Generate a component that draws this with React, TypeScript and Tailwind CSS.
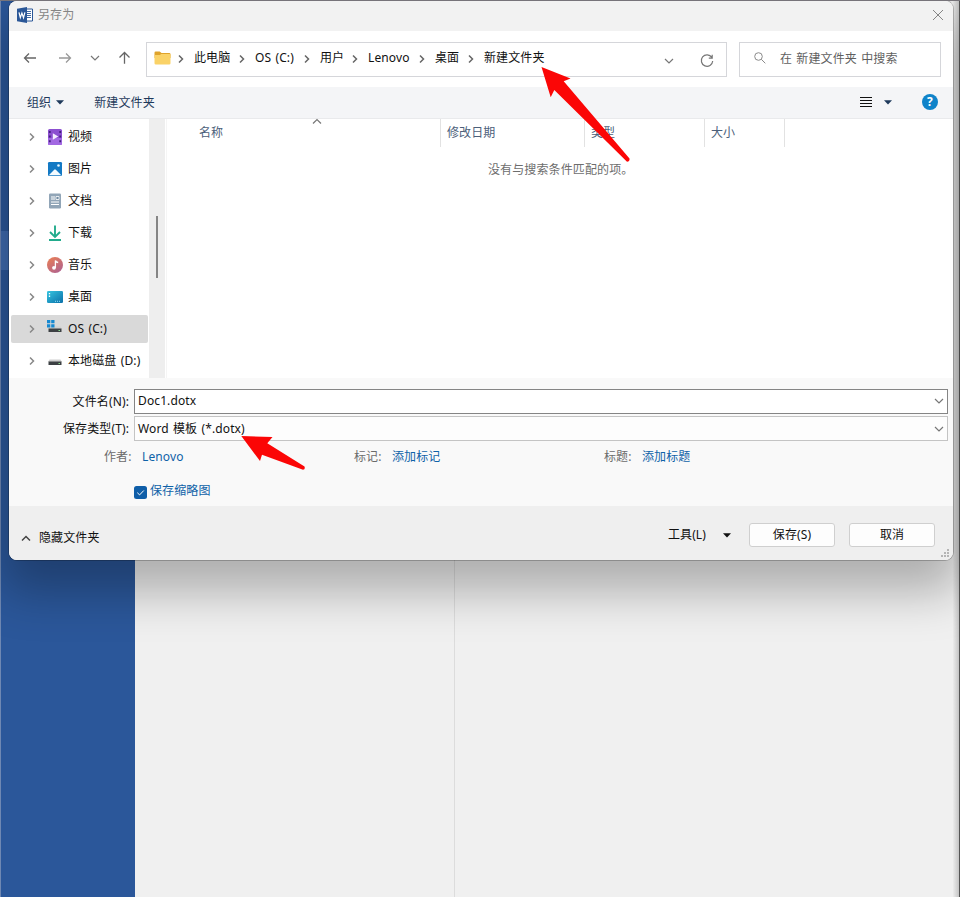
import type { ReactNode } from "react";

const crumbs = [
  { label: "此电脑", width: "w-[61px]" },
  { label: "OS (C:)", width: "w-[65px]" },
  { label: "用户", width: "w-[48px]" },
  { label: "Lenovo", width: "w-[67px]" },
  { label: "桌面", width: "w-[49px]" },
  { label: "新建文件夹", width: "w-[90px]" },
];

const columns = [
  { label: "名称", className: "w-[242px]", sorted: true },
  { label: "修改日期", className: "w-[144px] pl-1.5" },
  { label: "类型", className: "w-[120px] pl-1.5" },
  { label: "大小", className: "w-[80px] pl-1.5" },
];

function Chevron({ dir, className = "" }: { dir: "up" | "down" | "right"; className?: string }) {
  const d = { up: "M1 6.5 5 2.5 9 6.5", down: "M1 3 5 7 9 3", right: "M3 1.5 6.500 5 3 8.500" }[dir];
  return (
    <svg viewBox="0 0 10 10" className={`size-[10px] shrink-0 stroke-[1.2] ${className}`} fill="none" stroke="currentColor">
      <path d={d} />
    </svg>
  );
}

function Caret({ className = "" }: { className?: string }) {
  return (
    <svg viewBox="0 0 8 5" className={`h-[5px] w-2 shrink-0 ${className}`} fill="currentColor">
      <path d="M0 .3h8L4 4.5z" />
    </svg>
  );
}

function WordIcon() {
  return (
    <svg viewBox="0 0 16 16" className="mb-0.5 size-4">
      <path d="M9 2h6.5v12H9z" fill="#fff" stroke="#2b5797" />
      <path d="M10 4.5h4M10 6.5h4M10 8.5h4M10 10.5h4" stroke="#2b5797" strokeWidth=".9" />
      <path d="M0 1.8 10 0v16L0 14.2z" fill="#2b5797" />
      <path d="m2 5.3 1.3 5.4L4.9 6l1.6 4.7L7.9 5.3" fill="none" stroke="#fff" strokeWidth="1.2" />
    </svg>
  );
}

function FolderIcon() {
  return (
    <svg viewBox="0 0 17 14" className="mb-0.5 h-[14px] w-[17px]">
      <path d="M.5 1.7Q.5.5 1.7.5h4L7.5 2h7.8q1.2 0 1.2 1.2V7H.5z" fill="#dfa32b" />
      <path d="M.5 4.8q0-.8.8-.8h4.5l1.5-1h8.2q1 0 1 1v8.2q0 1.3-1.3 1.3H1.8Q.5 13.5.5 12.2z" fill="#fad267" />
    </svg>
  );
}

function DriveShape() {
  return (
    <>
      <path d="M2.5 6.5h11L15 9H1z" fill="#d0d0d0" />
      <path d="M1.5 8.500h13V12h-13z" fill="#3c4043" />
      <path d="M11.500 10.500H13" stroke="#8bdc8b" />
    </>
  );
}

const places: { label: string; selected?: boolean; icon: ReactNode }[] = [
  {
    label: "视频",
    icon: (
      <>
        <rect x="1" width="14" height="16" rx="1.5" fill="#8c4fd0" />
        <path d="M1 9h14v5.500q0 1.500-1.500 1.500h-11Q1 16 1 14.500z" fill="#a268e2" />
        <path d="M2.8 2v12M13.2 2v12" stroke="#43217c" strokeWidth="1.8" strokeDasharray="2 2.6" />
        <path d="m5.8 4.200 5.500 3.300-5.500 3.300z" fill="#f5edff" />
      </>
    ),
  },
  {
    label: "图片",
    icon: (
      <>
        <rect x="1" y="1" width="14" height="14" rx="1.2" fill="#1379c4" />
        <path d="m1.8 14.300 5.400-5.600q.8-.8 1.600 0l5.500 5.600z" fill="#f4fbff" />
        <circle cx="11.5" cy="4.500" r="1.3" fill="#e8f7ff" />
      </>
    ),
  },
  {
    label: "文档",
    icon: (
      <>
        <rect x="2" y=".5" width="12" height="15" rx="1.2" fill="#91a5b7" />
        <path d="M4 4h4M4 6h4M4 9h8M4 11.5h8" stroke="#fff" />
        <path d="M9 3.5h3v3H9z" fill="#6f8aa2" stroke="#fff" strokeWidth=".8" />
      </>
    ),
  },
  {
    label: "下载",
    icon: <path d="M8 .5v11M3 7l5 5 5-5M2 15h12" fill="none" stroke="#22ab8c" strokeWidth="1.9" />,
  },
  {
    label: "音乐",
    icon: (
      <>
        <defs>
          <linearGradient id="music" x1="0" y1="0" x2=".7" y2="1">
            <stop stopColor="#ec8052" />
            <stop offset="1" stopColor="#b2638d" />
          </linearGradient>
        </defs>
        <circle cx="8" cy="8" r="8" fill="url(#music)" />
        <circle cx="7" cy="10.8" r="1.9" fill="#fff" />
        <path d="M8.4 10.8V3.5q.5 1.7 2.8 2" fill="none" stroke="#fff" strokeWidth="1.3" />
      </>
    ),
  },
  {
    label: "桌面",
    icon: (
      <>
        <defs>
          <linearGradient id="desk" x1="0" y1="0" x2="1" y2="1">
            <stop stopColor="#36c5e0" />
            <stop offset="1" stopColor="#0b70a9" />
          </linearGradient>
        </defs>
        <rect y="2" width="16" height="12" rx="1.3" fill="url(#desk)" />
        <path d="M2.5 4v4" stroke="#fff" strokeWidth="1.3" strokeDasharray="1.3 1.3" />
        <path d="M8 12.3h6" stroke="#8edcf5" strokeDasharray="1 1" />
      </>
    ),
  },
  {
    label: "OS (C:)",
    selected: true,
    icon: (
      <>
        <DriveShape />
        <path d="M0 0h3.3v3.3H0zM4.200 0h3.300v3.300H4.200zM0 4.200h3.300v3.300H0zM4.200 4.200h3.300v3.300H4.200z" fill="#1689d1" />
      </>
    ),
  },
  { label: "本地磁盘 (D:)", icon: <DriveShape /> },
];

function TitleBar() {
  return (
    <header className="flex h-[30px] shrink-0 items-center bg-[#f2f2f2] pr-[9px] pl-2">
      <WordIcon />
      <span className="mb-0.5 ml-[5px] text-[#858585]">另存为</span>
      <svg viewBox="0 0 12 12" className="mb-0.5 ml-auto size-3" stroke="#858585" fill="none">
        <path d="m1 1 10 10M11 1 1 11" />
      </svg>
    </header>
  );
}

function NavBar() {
  return (
    <nav className="flex h-14 shrink-0 items-center bg-white">
      <div className="flex w-[137px] shrink-0 items-center pb-[3px] pl-[14px]">
        <svg viewBox="0 0 14 14" className="size-[14px]" fill="none" stroke="#666" strokeWidth="1.3">
          <path d="M13 7H1.500M6 2.500 1.500 7 6 11.500" />
        </svg>
        <svg viewBox="0 0 14 14" className="ml-[21px] size-[14px]" fill="none" stroke="#999" strokeWidth="1.3">
          <path d="M1 7h11.500M8 2.500 12.500 7 8 11.500" />
        </svg>
        <Chevron dir="down" className="ml-[18px] text-[#777]" />
        <svg viewBox="0 0 14 14" className="ml-[17px] size-[14px]" fill="none" stroke="#666" strokeWidth="1.3">
          <path d="M7.500 12.800V1.500M2.500 6.500l5-5 5 5" />
        </svg>
      </div>
      <div className="flex h-[35px] w-[581px] shrink-0 items-center border border-[#d5d6da] pr-3 pl-[7px]">
        <FolderIcon />
        <div className="ml-[5px] flex">
          {crumbs.map((crumb) => (
            <div key={crumb.label} className={`flex shrink-0 items-center gap-2 pb-0.5 whitespace-nowrap ${crumb.width}`}>
              <Chevron dir="right" className="mt-0.5 stroke-[1.5] text-[#666]" />
              <span>{crumb.label}</span>
            </div>
          ))}
        </div>
        <Chevron dir="down" className="mt-[3px] ml-auto text-[#777]" />
        <svg viewBox="0 0 14 14" className="mt-[3px] ml-[26px] size-[14px]" fill="none" stroke="#777" strokeWidth="1.2">
          <path d="M11.8 3.5A5.7 5.7 0 1 0 12.700 7M12.200.8v3.400H8.800" />
        </svg>
      </div>
      <div className="ml-3 flex h-[35px] w-[202px] items-center border border-[#d5d6da] pl-[14px] text-[#5f5f5f]">
        <svg viewBox="0 0 12 12" className="mb-0.5 size-3" fill="none" stroke="#8a8a8a">
          <circle cx="4.5" cy="4.5" r="3.8" />
          <path d="m7.3 7.3 4 4" />
        </svg>
        <span className="ml-[14px]">在 新建文件夹 中搜索</span>
      </div>
    </nav>
  );
}

function Toolbar() {
  return (
    <div className="flex h-8 shrink-0 items-center border-b border-[#e9eaec] bg-[#f4f5f7] pr-[15px] pl-[18px] text-[#1e395b]">
      <span>组织</span>
      <Caret className="ml-[5px]" />
      <span className="ml-[30px]">新建文件夹</span>
      <svg viewBox="0 0 12 11" className="ml-auto h-[11px] w-3" stroke="#111">
        <path d="M0 .5h12M0 3.5h12M0 6.5h12M0 9.5h12" />
      </svg>
      <Caret className="ml-3" />
      <span className="mb-px ml-[30px] flex size-4 items-center justify-center rounded-full bg-[#0f83c9] text-[12px] leading-none font-bold text-white">
        ?
      </span>
    </div>
  );
}

function Sidebar() {
  return (
    <aside className="flex w-[156px] shrink-0">
      <ul className="w-[140px] pt-0.5 pr-px pl-0.5">
        {places.map((place) => (
          <li key={place.label} className="flex h-8 items-center">
            <div
              className={`flex h-7 w-full items-center rounded-[2px] pl-4 whitespace-nowrap ${place.selected ? "bg-[#d9d9d9]" : ""}`}
            >
              <Chevron dir="right" className="stroke-[1.5] text-[#888]" />
              <svg viewBox="0 0 16 16" className={`ml-[10px] size-4 shrink-0 ${place.selected ? "mb-0.5" : ""}`}>
                {place.icon}
              </svg>
              <span className="ml-[5px]">{place.label}</span>
            </div>
          </li>
        ))}
      </ul>
      <div className="flex w-4 justify-center bg-[#eeeeee] pt-[97px]">
        <div className="h-[62px] w-0.5 bg-[#858585]" />
      </div>
    </aside>
  );
}

function FileList() {
  return (
    <section className="ml-px flex-1 border-l border-[#f5f5f5]">
      <div className="flex h-7 pl-8 text-[#4c607a]">
        {columns.map((column) => (
          <div key={column.label} className={`flex shrink-0 justify-between border-r border-[#e2e2e2] pt-[5px] ${column.className}`}>
            <span>{column.label}</span>
            {column.sorted && <Chevron dir="up" className="-mt-[7px] mr-[118px] text-[#777]" />}
          </div>
        ))}
      </div>
      <p className="mt-[14px] pl-[321px] text-[#6d6d6d]">没有与搜索条件匹配的项。</p>
    </section>
  );
}

function Field({ label, value, strong }: { label: string; value: string; strong?: boolean }) {
  return (
    <div className="flex items-center">
      <label className="mr-[5px] w-[120px] text-right">{label}</label>
      <div
        className={`flex h-[25px] w-[814px] items-center justify-between border px-[3px] ${strong ? "border-[#858585] bg-white pb-px" : "border-[#c4c4c4] bg-[#fdfdfd]"}`}
      >
        <span>{value}</span>
        <Chevron dir="down" className="text-[#777]" />
      </div>
    </div>
  );
}

function SaveForm() {
  return (
    <section className="flex h-32 shrink-0 flex-col bg-[#f9f9f9] pt-[11px]">
      <div className="flex flex-col gap-0.5">
        <Field label="文件名(N):" value="Doc1.dotx" strong />
        <Field label="保存类型(T):" value="Word 模板 (*.dotx)" />
      </div>
      <dl className="mt-[7px] flex pl-[95px] text-[#0f62a8]">
        <div className="flex w-[250px]">
          <dt className="w-[38px] text-[#6b6b6b]">作者:</dt>
          <dd>Lenovo</dd>
        </div>
        <div className="flex w-[250px]">
          <dt className="w-[38px] text-[#6b6b6b]">标记:</dt>
          <dd>添加标记</dd>
        </div>
        <div className="flex">
          <dt className="w-[38px] text-[#6b6b6b]">标题:</dt>
          <dd>添加标题</dd>
        </div>
      </dl>
      <label className="mt-4 flex items-center pl-[125px] text-[#0f62a8]">
        <svg viewBox="0 0 13 13" className="mt-[3px] mr-[3px] size-[13px]">
          <rect width="13" height="13" rx="2.5" fill="#0f5ea8" />
          <path d="m3.3 6.7 2.3 2.2 4.200-4.400" fill="none" stroke="#fff" />
        </svg>
        保存缩略图
      </label>
    </section>
  );
}

function Footer() {
  return (
    <footer className="flex flex-1 items-center bg-[#efefef] pr-[18px] pl-3">
      <Chevron dir="up" className="mt-[11px] stroke-[1.5] text-[#444]" />
      <span className="mt-2.5 ml-2">隐藏文件夹</span>
      <span className="mt-1 ml-auto">工具(L)</span>
      <Caret className="mt-1 ml-[17px]" />
      <button className="mt-1 ml-[18px] h-6 w-[86px] rounded-[3px] border border-[#cfcfcf] bg-[#fdfdfd]">保存(S)</button>
      <button className="mt-1 ml-[14px] h-6 w-[86px] rounded-[3px] border border-[#cfcfcf] bg-[#fdfdfd]">取消</button>
    </footer>
  );
}

function SaveDialog() {
  return (
    <div className="absolute top-px left-[9px] flex h-[559px] w-[944px] flex-col overflow-hidden rounded-lg bg-white text-[#111] shadow-[0_0_0_1px_rgba(0,0,0,0.22),0_24px_48px_8px_rgba(0,0,0,0.28)]">
      <TitleBar />
      <NavBar />
      <Toolbar />
      <div className="flex h-[259px] shrink-0">
        <Sidebar />
        <FileList />
      </div>
      <SaveForm />
      <Footer />
      <svg viewBox="0 0 9 9" className="absolute right-[3px] bottom-0.5 size-[9px]" fill="#b5b5b5">
        <path d="M6 0h2v2H6zM3 3h2v2H3zM6 3h2v2H6zM0 6h2v2H0zM3 6h2v2H3zM6 6h2v2H6z" />
      </svg>
    </div>
  );
}

export default function App() {
  return (
    <main className="relative flex h-[897px] w-[960px] overflow-hidden border-t border-[#77747a] bg-[#f0f0f0] font-['Noto_Sans','Noto_Sans_CJK_SC',sans-serif] text-[12px] leading-[18px] tracking-[0.12px] [word-spacing:1px]">
      <div className="w-[135px] border-l border-[#6f88b3] bg-[#2b579a] pt-[230px]">
        <div className="h-[39px] bg-[#3f6bb0]" />
      </div>
      <div className="w-80 border-r border-[#dcdcdc]" />
      <div className="flex-1" />
      <div className="w-1.5 bg-linear-to-r from-[#ececec] to-[#c4c4c4]" />
      <div className="w-px bg-[#555]" />
      <div className="absolute -top-px left-0 h-[897px] w-[960px]">
        <SaveDialog />
        <svg viewBox="0 0 960 897" className="pointer-events-none absolute inset-0" fill="#fb0606">
          <path d="M541.5 67 570.5 78.5 563.7 81.3 629.5 158.5Q630 161.5 627 161.7L554.3 90 550.7 97.2z" />
          <path d="M241.3 436 272.5 437 267.3 443.3 304.5 466.5Q305.5 469.5 303 469.700L262 454.700 260 461z" />
        </svg>
      </div>
    </main>
  );
}
